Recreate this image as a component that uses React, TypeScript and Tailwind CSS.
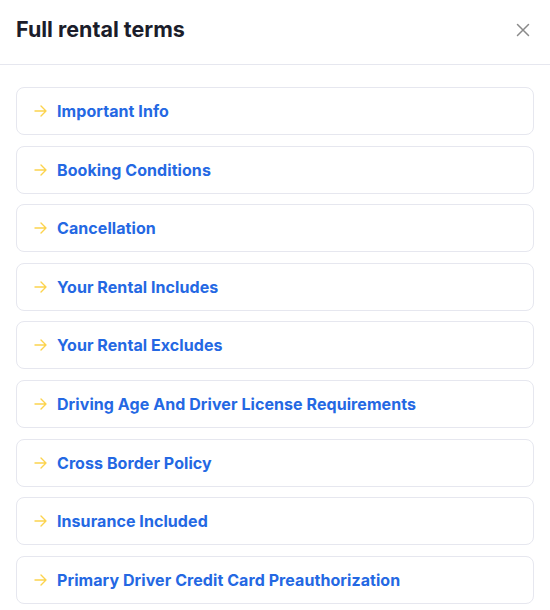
import React from "react";

const items = [
  "Important Info",
  "Booking Conditions",
  "Cancellation",
  "Your Rental Includes",
  "Your Rental Excludes",
  "Driving Age And Driver License Requirements",
  "Cross Border Policy",
  "Insurance Included",
  "Primary Driver Credit Card Preauthorization",
];

export default function App() {
  return (
    <div className="w-[550px] h-[610px] bg-white overflow-hidden" style={{ fontFamily: "Inter, 'Noto Sans', sans-serif" }}>
      <div className="h-[65px] flex items-center justify-between pl-4 pr-[20px] border-b border-[#e6e7ef]">
        <h2 className="text-[21.5px] font-bold text-[#1b1d2b] -mt-[5px]">Full rental terms</h2>
        <svg width="14" height="14" viewBox="0 0 14 14" className="-mt-[5px]" fill="none" stroke="#8a8a8a" strokeWidth="1.5" strokeLinecap="round">
          <path d="M1.5 1.5L12.5 12.5M12.5 1.5L1.5 12.5" />
        </svg>
      </div>
      <div className="flex flex-col gap-[10.6px] px-4 pt-[22px]">
        {items.map((t) => (
          <div key={t} className="h-[48px] flex items-center gap-[10px] pl-[17px] border border-[#e6e7ef] rounded-lg">
            <svg width="13" height="12" viewBox="0 0 13 12" fill="none" stroke="#fcd34d" strokeWidth="1.4" strokeLinecap="round" strokeLinejoin="round">
              <path d="M1 6H12M7 1L12 6L7 11" />
            </svg>
            <span className="text-[16px] font-bold tracking-[0.07px] text-[#2468e3]">{t}</span>
          </div>
        ))}
      </div>
    </div>
  );
}
